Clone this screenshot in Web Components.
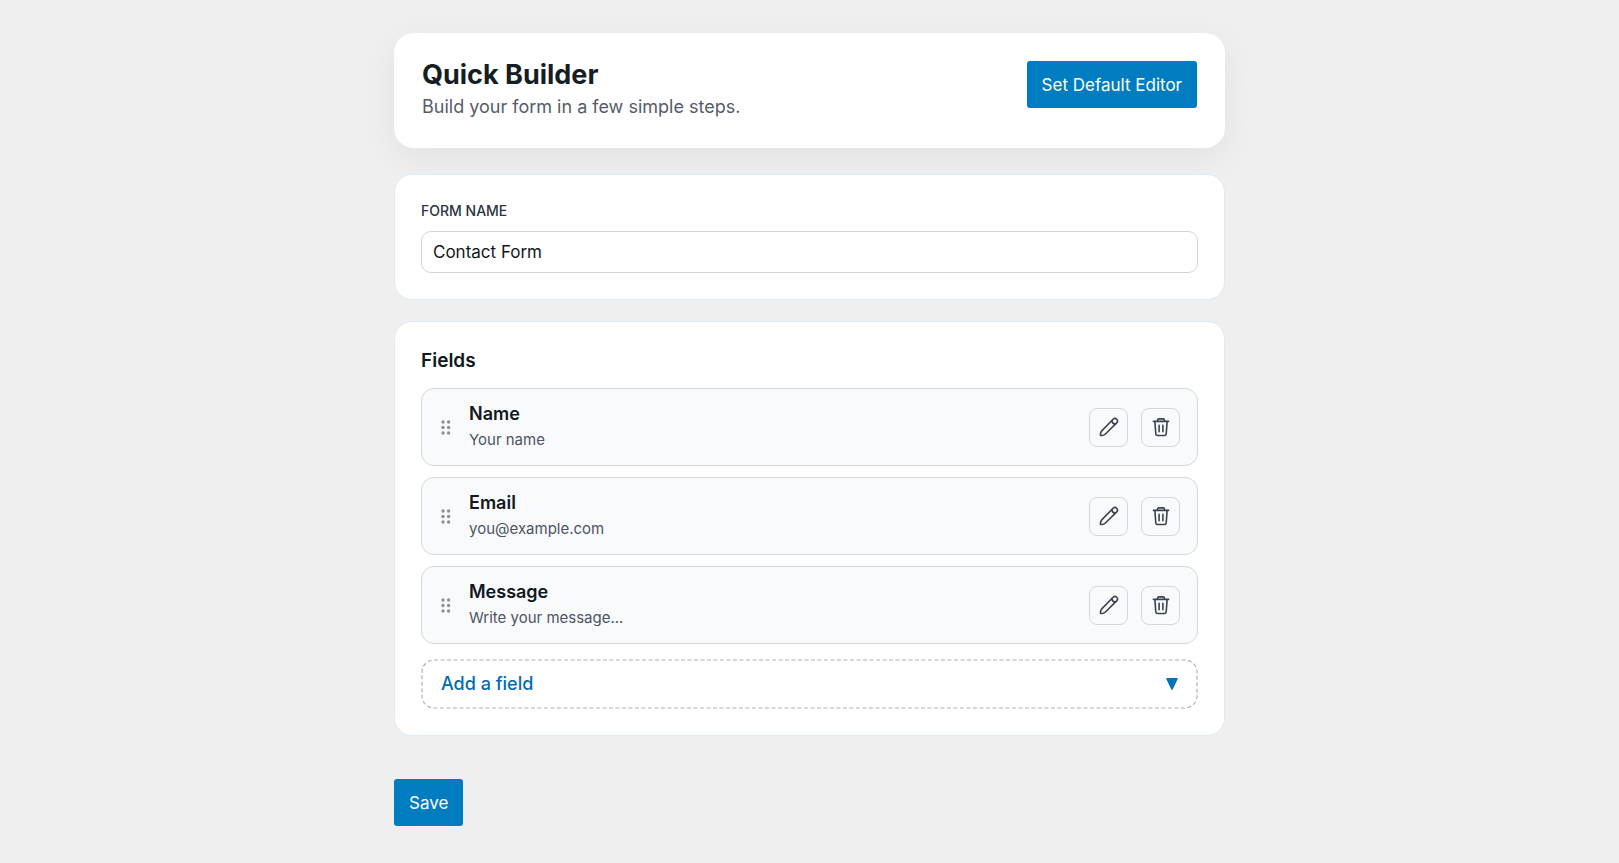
<!DOCTYPE html>
<html lang="en">
<head>
<meta charset="utf-8">
<meta name="viewport" content="width=device-width, initial-scale=1">
<title>Quick Builder</title>
<style>
  body {
    margin: 0;
    background: #efefef;
    color: #101820;
    font-family: Inter, "Liberation Sans", sans-serif;
    font-size: 17px;
  }
</style>
</head>
<body>
  <qb-page>
    <qb-header>
      <span slot="title">Quick Builder</span>
      <span slot="subtitle">Build your form in a few simple steps.</span>
      <qb-button slot="action">Set Default Editor</qb-button>
    </qb-header>
    <qb-card>
      <qb-text-field label="Form name" value="Contact Form"></qb-text-field>
    </qb-card>
    <qb-card heading="Fields">
      <qb-field-list>
        <qb-field-row name="Name">Your name</qb-field-row>
        <qb-field-row name="Email">you@example.com</qb-field-row>
        <qb-field-row name="Message">Write your message...</qb-field-row>
      </qb-field-list>
      <qb-add-field>Add a field</qb-add-field>
    </qb-card>
    <qb-button slot="footer">Save</qb-button>
  </qb-page>

<script>
class QbPage extends HTMLElement {
  constructor() {
    super();
    this.attachShadow({ mode: 'open' });
    this.shadowRoot.innerHTML = `
    <style>
      :host {
        display: block;
        box-sizing: border-box;
        padding: 33px 16px;
      }
      main {
        max-width: 831px;
        margin: 0 auto;
      }
      ::slotted(qb-card) {
        margin-bottom: 21px;
      }
      footer {
        margin-top: 43px;
      }
    </style>
      <main>
        <slot></slot>
        <footer><slot name="footer"></slot></footer>
      </main>
    `
  }
}

class QbHeader extends HTMLElement {
  constructor() {
    super();
    this.attachShadow({ mode: 'open' });
    this.shadowRoot.innerHTML = `
    <style>
      :host {
        display: block;
        margin-bottom: 26px;
      }
      header {
        display: flex;
        align-items: flex-start;
        justify-content: space-between;
        gap: 20px;
        padding: 28px;
        background: #fff;
        border-radius: 20px;
        box-shadow: 0 10px 36px rgba(15, 23, 42, 0.06);
      }
      h1 {
        margin: 0;
        font-size: 27px;
        line-height: 27px;
        font-weight: 700;
        color: #161d23;
      }
      p {
        margin: 5px 0 0;
        font-size: 18px;
        line-height: 27px;
        color: #555c68;
      }
    </style>
      <header>
        <div>
          <h1><slot name="title"></slot></h1>
          <p><slot name="subtitle"></slot></p>
        </div>
        <slot name="action"></slot>
      </header>
    `
  }
}

class QbButton extends HTMLElement {
  constructor() {
    super();
    this.attachShadow({ mode: 'open' });
    this.shadowRoot.innerHTML = `
    <style>
      :host {
        display: inline-block;
        vertical-align: top;
      }
      button {
        display: block;
        padding: 13px 15px 11px;
        border: 0;
        border-radius: 3px;
        background: #007dc1;
        color: #fff;
        font: inherit;
        font-size: 17px;
        line-height: 23px;
        cursor: pointer;
      }
      button:hover {
        background: #006ba6;
      }
    </style>
      <button type="button"><slot></slot></button>
    `
  }
}

class QbCard extends HTMLElement {
  constructor() {
    super();
    this.attachShadow({ mode: 'open' });
    this.shadowRoot.innerHTML = `
    <style>
      :host {
        display: block;
      }
      section {
        padding: 26px;
        background: #fff;
        border: 1px solid #dbebfa;
        border-radius: 18px;
      }
      h2 {
        margin: 0 0 15px;
        font-size: 19px;
        line-height: 25px;
        font-weight: 600;
        color: #101820;
      }
    </style>
      <section><slot></slot></section>
    `
  }

  connectedCallback() {
    if (this.hasAttribute('heading') && !this.shadowRoot.querySelector('h2')) {
      const heading = document.createElement('h2');
      heading.textContent = this.getAttribute('heading');
      this.shadowRoot.querySelector('section').prepend(heading);
    }
  }
}

class QbTextField extends HTMLElement {
  constructor() {
    super();
    this.attachShadow({ mode: 'open' });
    this.shadowRoot.innerHTML = `
    <style>
      :host {
        display: block;
      }
      label {
        display: block;
        margin-bottom: 10px;
        font-size: 14px;
        line-height: 20px;
        font-weight: 500;
        text-transform: uppercase;
        color: #2b3440;
      }
      input {
        display: block;
        box-sizing: border-box;
        width: 100%;
        height: 42px;
        padding: 0 11px;
        border: 1px solid #d2d4d6;
        border-radius: 10px;
        background: #fff;
        color: #101820;
        font: inherit;
        font-size: 17px;
      }
    </style>
      <label for="field"></label>
      <input id="field" type="text">
    `
  }

  connectedCallback() {
    this.shadowRoot.querySelector('label').textContent = this.getAttribute('label');
    this.shadowRoot.querySelector('input').value = this.getAttribute('value') || '';
  }
}

class QbFieldList extends HTMLElement {
  constructor() {
    super();
    this.attachShadow({ mode: 'open' });
    this.shadowRoot.innerHTML = `
    <style>
      :host {
        display: flex;
        flex-direction: column;
        gap: 11px;
      }
    </style>
      <slot></slot>
    `
  }
}

class QbIconButton extends HTMLElement {
  constructor() {
    super();
    this.attachShadow({ mode: 'open' });
    this.shadowRoot.innerHTML = `
    <style>
      :host {
        display: block;
      }
      button {
        display: flex;
        align-items: center;
        justify-content: center;
        box-sizing: border-box;
        width: 39px;
        height: 39px;
        padding: 0;
        border: 1px solid #d5d7da;
        border-radius: 8px;
        background: transparent;
        color: #3c4350;
        cursor: pointer;
      }
      svg {
        display: block;
        fill: none;
        stroke: currentColor;
        stroke-linecap: round;
        stroke-linejoin: round;
      }
    </style>
      <button type="button"></button>
    `
  }

  connectedCallback() {
    const button = this.shadowRoot.querySelector('button');
    button.setAttribute('aria-label', this.getAttribute('label'));
    button.innerHTML = QbIconButton.icons[this.getAttribute('icon')];
  }
}

QbIconButton.icons = {
  edit: `
    <svg width="20" height="20" viewBox="0 0 20 20" stroke-width="1.6" aria-hidden="true">
      <path d="M1.6 18.4c-.4-1.6.2-3.6 1.4-4.8L14.1 2.3a2.5 2.5 0 0 1 3.6 3.6L6.4 17c-1.2 1.2-3.2 1.8-4.8 1.4Z"/>
      <path d="M12.9 3.6c.1 2 1.5 3.4 3.5 3.5"/>
    </svg>`,
  remove: `
    <svg width="20" height="20" viewBox="0 0 20 20" stroke-width="1.6" aria-hidden="true">
      <path d="M2.4 4.4h15.2"/>
      <path d="M6.6 4.2V3a1.1 1.1 0 0 1 1.1-1.1h4.6A1.1 1.1 0 0 1 13.4 3v1.2"/>
      <path d="M3.9 4.6 4.8 17a1.7 1.7 0 0 0 1.7 1.5h7a1.7 1.7 0 0 0 1.7-1.5l.9-12.4"/>
      <path d="M8.1 8.2v6.6M11.9 8.2v6.6"/>
    </svg>`
};

class QbFieldRow extends HTMLElement {
  constructor() {
    super();
    this.attachShadow({ mode: 'open' });
    this.shadowRoot.innerHTML = `
    <style>
      :host {
        display: flex;
        align-items: center;
        gap: 13px;
        box-sizing: border-box;
        padding: 12px 17px 12px 19px;
        border: 1px solid #d5d7da;
        border-radius: 13px;
        background: #f9fafc;
      }
      .handle {
        flex: none;
        display: block;
        margin-right: 5px;
        fill: #8f9092;
        cursor: grab;
      }
      .text {
        flex: 1;
        min-width: 0;
      }
      h3 {
        margin: 0;
        font-size: 18px;
        line-height: 26px;
        font-weight: 600;
        color: #101820;
      }
      p {
        margin: 0;
        font-size: 15px;
        line-height: 26px;
        color: #4d5461;
      }
    </style>
      <svg class="handle" width="10" height="15" viewBox="0 0 10 15" aria-hidden="true">
        <circle cx="2" cy="2" r="1.7"/><circle cx="7.6" cy="2" r="1.7"/>
        <circle cx="2" cy="7.5" r="1.7"/><circle cx="7.6" cy="7.5" r="1.7"/>
        <circle cx="2" cy="13" r="1.7"/><circle cx="7.6" cy="13" r="1.7"/>
      </svg>
      <div class="text">
        <h3></h3>
        <p><slot></slot></p>
      </div>
      <qb-icon-button icon="edit" label="Edit"></qb-icon-button>
      <qb-icon-button icon="remove" label="Delete"></qb-icon-button>
    `
  }

  connectedCallback() {
    this.shadowRoot.querySelector('h3').textContent = this.getAttribute('name');
  }
}

class QbAddField extends HTMLElement {
  constructor() {
    super();
    this.attachShadow({ mode: 'open' });
    this.shadowRoot.innerHTML = `
    <style>
      :host {
        display: block;
        margin-top: 15px;
      }
      button {
        position: relative;
        display: flex;
        align-items: center;
        justify-content: space-between;
        box-sizing: border-box;
        width: 100%;
        padding: 13px 20px;
        border: 0;
        border-radius: 13px;
        background: #fff;
        color: #006bb3;
        font: inherit;
        font-size: 18px;
        line-height: 24px;
        font-weight: 500;
        cursor: pointer;
      }
      svg {
        display: block;
      }
      .caret {
        fill: #0073bb;
      }
      /* long dashes, which border-style: dashed does not give at 1px */
      .outline {
        position: absolute;
        inset: 0;
        width: 100%;
        height: 100%;
        padding: 1px;
        box-sizing: border-box;
        overflow: visible;
        fill: none;
        stroke: #b0b1b3;
        stroke-width: 1.2;
        stroke-dasharray: 4 2.5;
      }
    </style>
      <button type="button" aria-haspopup="true">
        <slot></slot>
        <svg class="caret" width="12" height="12" viewBox="0 0 12 12" aria-hidden="true">
          <path d="M.9 0h10.2q1.1 0 .6 1L6.8 11.2q-.8 1.4-1.6 0L.3 1Q-.2 0 .9 0Z"/>
        </svg>
        <svg class="outline" aria-hidden="true"><rect width="100%" height="100%" rx="12"/></svg>
      </button>
    `
  }
}

customElements.define('qb-page', QbPage);
customElements.define('qb-header', QbHeader);
customElements.define('qb-button', QbButton);
customElements.define('qb-card', QbCard);
customElements.define('qb-text-field', QbTextField);
customElements.define('qb-field-list', QbFieldList);
customElements.define('qb-icon-button', QbIconButton);
customElements.define('qb-field-row', QbFieldRow);
customElements.define('qb-add-field', QbAddField);
</script>
</body>
</html>
